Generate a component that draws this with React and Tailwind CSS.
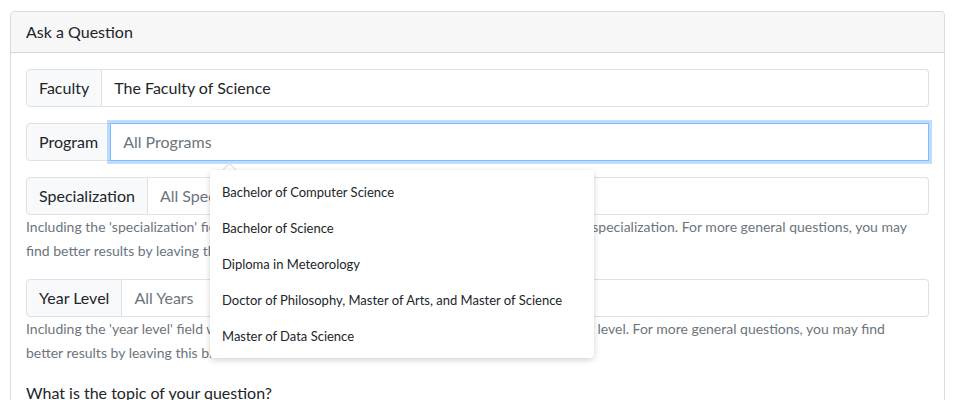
const programs = [
  'Bachelor of Computer Science',
  'Bachelor of Science',
  'Diploma in Meteorology',
  'Doctor of Philosophy, Master of Arts, and Master of Science',
  'Master of Data Science',
];

function Group({ label, value, focused, muted }) {
  return (
    <div className="flex h-[38px]">
      <span className="flex items-center px-3 border border-[#dee2e6] bg-[#f8f9fa] rounded-l-[4px] text-[#212529] whitespace-nowrap">
        {label}
      </span>
      {focused ? (
        <div className="flex-1 flex items-center pl-3 border border-[#80bdff] -ml-px shadow-[0_0_0_3px_rgba(0,123,255,0.25)] text-[#6c757d] bg-white relative z-10">
          {value}
        </div>
      ) : (
        <div
          className={`flex-1 flex items-center pl-3 border border-l-0 border-[#dee2e6] rounded-r-[4px] bg-white ${muted ? 'text-[#6c757d]' : 'text-[#212529]'}`}
        >
          {value}
        </div>
      )}
    </div>
  );
}

export default function App() {
  return (
    <div className="bg-white min-h-[400px] h-[400px] overflow-hidden pt-[11px] pl-[10px] font-['Lato','Open_Sans',sans-serif] text-[16px] leading-[24px]">
      <div className="w-[935px] border border-[#dadada] rounded-[4px] relative">
        <div className="bg-[#f7f7f7] border-b border-[#d6d6d6] px-[15px] py-2 text-[#212529] rounded-t-[4px]">
          Ask a Question
        </div>
        <div className="px-[15px] pt-4 pb-4">
          <div className="mb-4">
            <Group label="Faculty" value="The Faculty of Science" />
          </div>
          <div className="mb-4 relative">
            <Group label="Program" value="All Programs" focused />
          </div>
          <Group label="Specialization" value="All Specializations" muted />
          <p className="text-[14px] leading-[24px] text-[#6c757d] mb-4">
            Including the 'specialization' field will return results that are specifically relevant to your own specialization. For more general questions, you may
            <br />
            find better results by leaving this blank.
          </p>
          <Group label="Year Level" value="All Years" muted />
          <p className="text-[14px] leading-[24px] text-[#6c757d] mb-4">
            Including the 'year level' field will return results that are specifically relevant to your own year level. For more general questions, you may find
            <br />
            better results by leaving this blank.
          </p>
          <p className="text-[#212529]">What is the topic of your question?</p>
        </div>

        <div className="absolute left-[199px] top-[158px] w-[384px] z-20">
          <div className="absolute left-[14px] -top-[5px] w-[11px] h-[11px] rotate-45 bg-white border-t border-l border-[#dcdcdc]" />
          <div className="relative bg-white rounded-[4px] shadow-[0_2px_6px_rgba(0,0,0,0.18)] py-1 text-[13px] text-[#212529]">
            {programs.map((p) => (
              <div key={p} className="h-[36px] flex items-center px-3 whitespace-nowrap">
                {p}
              </div>
            ))}
          </div>
        </div>
      </div>
    </div>
  );
}
